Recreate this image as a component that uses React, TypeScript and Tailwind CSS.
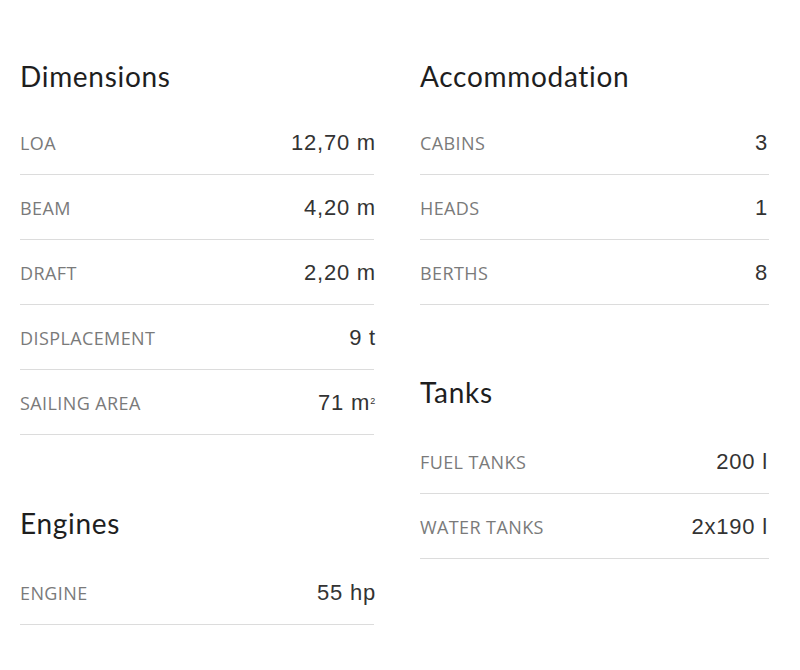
import React from "react";

type Row = { label: string; value: React.ReactNode };

const Section = ({
  title,
  rows,
  className = "",
  headClass = "mb-4",
  valueClass = "-mr-[2px]",
}: {
  title: string;
  rows: Row[];
  className?: string;
  headClass?: string;
  valueClass?: string;
}) => (
  <div className={className}>
    <h2
      className={`h-9 leading-9 text-[28px] text-[#1e1e1e] font-['Lato',sans-serif] tracking-[0.7px] ${headClass}`}
    >
      {title}
    </h2>
    {rows.map((r) => (
      <div
        key={r.label}
        className="h-[65px] flex items-center justify-between border-b border-[#dcdcdc]"
      >
        <span className="text-[18px] text-[#7a7a7a] font-['Open_Sans',sans-serif] uppercase tracking-[0.4px] pt-[2px]">
          {r.label}
        </span>
        <span
          className={`text-[22px] text-[#333] font-['Liberation_Sans',Arial,sans-serif] tracking-[0.8px] ${valueClass}`}
        >
          {r.value}
        </span>
      </div>
    ))}
  </div>
);

export default function App() {
  return (
    <div className="w-[800px] h-[670px] bg-white pt-[58px] pl-5 flex gap-[46px]">
      <div className="w-[354px] flex flex-col">
        <Section
          title="Dimensions"
          rows={[
            { label: "LOA", value: "12,70 m" },
            { label: "Beam", value: "4,20 m" },
            { label: "Draft", value: "2,20 m" },
            { label: "Displacement", value: "9 t" },
            {
              label: "Sailing area",
              value: (
                <>
                  71 m<sup className="text-[9px] relative -top-[6px] align-baseline">2</sup>
                </>
              ),
            },
          ]}
        />
        <Section
          className="mt-[70px]"
          headClass="mb-[19px]"
          title="Engines"
          rows={[{ label: "Engine", value: "55 hp" }]}
        />
      </div>
      <div className="w-[349px] flex flex-col">
        <Section
          title="Accommodation"
          valueClass="pr-px"
          rows={[
            { label: "Cabins", value: "3" },
            { label: "Heads", value: "1" },
            { label: "Berths", value: "8" },
          ]}
        />
        <Section
          className="mt-[69px]"
          headClass="mb-[19px]"
          valueClass="pr-px"
          title="Tanks"
          rows={[
            { label: "Fuel tanks", value: "200 l" },
            { label: "Water tanks", value: "2x190 l" },
          ]}
        />
      </div>
    </div>
  );
}
